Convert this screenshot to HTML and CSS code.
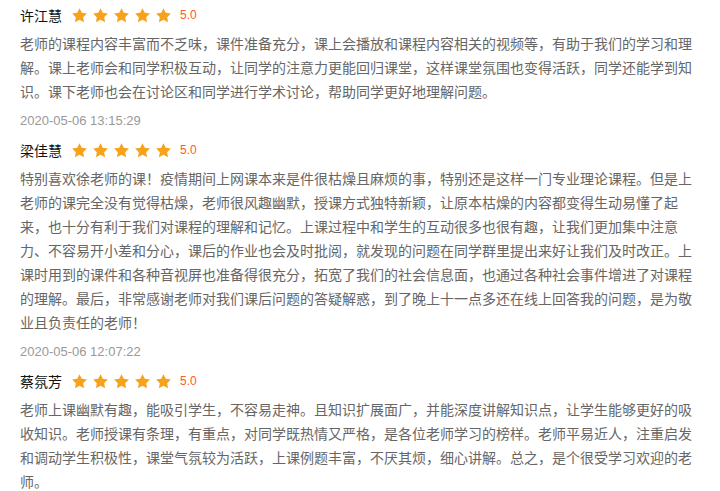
FILE: index.html
```html
<!DOCTYPE html>
<html lang="zh-CN">
<head>
<meta charset="utf-8">
<title>评价</title>
<link rel="stylesheet" href="styles.css">
</head>
<body>
<svg width="0" height="0" class="defs">
  <defs>
    <path id="star" d="M12 1.6l3.2 6.6 7.2 1-5.2 5.1 1.25 7.2L12 18.1l-6.45 3.4 1.25-7.2L1.6 9.2l7.2-1z"/>
  </defs>
</svg>
<div class="list">
  <div class="review">
    <div class="head">
      <span class="name">许江慧</span>
      <span class="stars">
        <svg class="star" viewBox="0 0 24 24"><use href="#star"/></svg>
        <svg class="star" viewBox="0 0 24 24"><use href="#star"/></svg>
        <svg class="star" viewBox="0 0 24 24"><use href="#star"/></svg>
        <svg class="star" viewBox="0 0 24 24"><use href="#star"/></svg>
        <svg class="star" viewBox="0 0 24 24"><use href="#star"/></svg>
      </span>
      <span class="score">5.0</span>
    </div>
    <p class="text">老师的课程内容丰富而不乏味，课件准备充分，课上会播放和课程内容相关的视频等，有助于我们的学习和理解。课上老师会和同学积极互动，让同学的注意力更能回归课堂，这样课堂氛围也变得活跃，同学还能学到知识。课下老师也会在讨论区和同学进行学术讨论，帮助同学更好地理解问题。</p>
    <div class="date">2020-05-06 13:15:29</div>
  </div>
  <div class="review">
    <div class="head">
      <span class="name">梁佳慧</span>
      <span class="stars">
        <svg class="star" viewBox="0 0 24 24"><use href="#star"/></svg>
        <svg class="star" viewBox="0 0 24 24"><use href="#star"/></svg>
        <svg class="star" viewBox="0 0 24 24"><use href="#star"/></svg>
        <svg class="star" viewBox="0 0 24 24"><use href="#star"/></svg>
        <svg class="star" viewBox="0 0 24 24"><use href="#star"/></svg>
      </span>
      <span class="score">5.0</span>
    </div>
    <p class="text">特别喜欢徐老师的课！疫情期间上网课本来是件很枯燥且麻烦的事，特别还是这样一门专业理论课程。但是上老师的课完全没有觉得枯燥，老师很风趣幽默，授课方式独特新颖，让原本枯燥的内容都变得生动易懂了起来，也十分有利于我们对课程的理解和记忆。上课过程中和学生的互动很多也很有趣，让我们更加集中注意力、不容易开小差和分心，课后的作业也会及时批阅，就发现的问题在同学群里提出来好让我们及时改正。上课时用到的课件和各种音视屏也准备得很充分，拓宽了我们的社会信息面，也通过各种社会事件增进了对课程的理解。最后，非常感谢老师对我们课后问题的答疑解惑，到了晚上十一点多还在线上回答我的问题，是为敬业且负责任的老师！</p>
    <div class="date">2020-05-06 12:07:22</div>
  </div>
  <div class="review">
    <div class="head">
      <span class="name">蔡氛芳</span>
      <span class="stars">
        <svg class="star" viewBox="0 0 24 24"><use href="#star"/></svg>
        <svg class="star" viewBox="0 0 24 24"><use href="#star"/></svg>
        <svg class="star" viewBox="0 0 24 24"><use href="#star"/></svg>
        <svg class="star" viewBox="0 0 24 24"><use href="#star"/></svg>
        <svg class="star" viewBox="0 0 24 24"><use href="#star"/></svg>
      </span>
      <span class="score">5.0</span>
    </div>
    <p class="text">老师上课幽默有趣，能吸引学生，不容易走神。且知识扩展面广，并能深度讲解知识点，让学生能够更好的吸收知识。老师授课有条理，有重点，对同学既热情又严格，是各位老师学习的榜样。老师平易近人，注重启发和调动学生积极性，课堂气氛较为活跃，上课例题丰富，不厌其烦，细心讲解。总之，是个很受学习欢迎的老师。</p>
  </div>
</div>
</body>
</html>
```

FILE: styles.css
```css
html, body {
  margin: 0;
  padding: 0;
  background: #fff;
}
body {
  font-family: "Noto Sans CJK SC", "Liberation Sans", sans-serif;
  overflow: hidden;
}
.defs {
  position: absolute;
  width: 0;
  height: 0;
}
.list {
  padding: 3px 20px 0 20px;
}
.review {
  margin-bottom: 7px;
}
.head {
  display: flex;
  align-items: center;
  height: 24px;
}
.name {
  font-size: 14px;
  color: #111;
  line-height: 24px;
}
.stars {
  display: flex;
  gap: 4px;
  margin-left: 9px;
}
.star {
  width: 17px;
  height: 17px;
  fill: #f7a21b;
  display: block;
}
.score {
  margin-left: 8px;
  font-family: "Liberation Sans", Arial, sans-serif;
  font-size: 12px;
  color: #ff5a23;
  line-height: 24px;
}
.text {
  margin: 4px 0 0 0;
  font-size: 14px;
  line-height: 24px;
  color: #666;
}
.date {
  margin-top: 8px;
  font-family: "Liberation Sans", Arial, sans-serif;
  font-size: 13px;
  line-height: 20px;
  color: #999;
}
```
